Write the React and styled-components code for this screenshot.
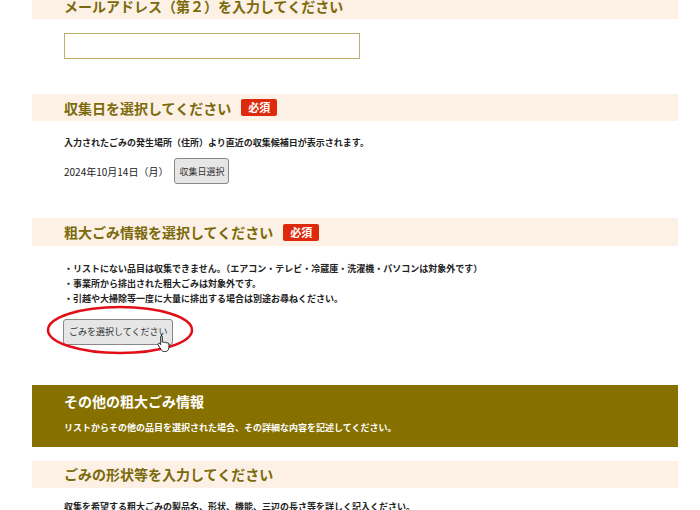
import React from 'react';
import styled, { createGlobalStyle } from 'styled-components';

const Global = createGlobalStyle`
  body { margin: 0; background: #fff; font-family: "Noto Sans CJK JP", "Noto Sans", sans-serif; color: #222; }
`;

const Page = styled.div`
  width: 646px;
  margin-left: 32px;
  margin-top: -8px;
`;

const Heading = styled.div`
  background: #fdf1e6;
  height: ${p => p.h || 27}px;
  padding-left: 32px;
  display: flex;
  align-items: center;
  gap: 10px;
  font-size: 14px;
  font-weight: bold;
  color: #7b6a0c;
  margin-top: ${p => p.mt || 0}px;
`;

const Required = styled.span`
  background: #dd2a0a;
  color: #fff;
  font-size: 11px;
  font-weight: bold;
  padding: 0 7px;
  height: 17px;
  line-height: 17px;
  border-radius: 2px;
`;

const Body = styled.div`
  padding-left: 32px;
  margin-top: ${p => p.mt || 0}px;
`;

const Input = styled.div`
  width: 294px;
  height: 24px;
  border: 1px solid #bfae6a;
  margin-top: 14px;
`;

const Note = styled.div`
  font-size: 9px;
  font-weight: bold;
  line-height: 15px;
  color: #222;
  white-space: nowrap;
`;

const DateRow = styled.div`
  display: flex;
  align-items: center;
  gap: 6px;
  font-size: 10px;
  margin-top: 8px;
`;

const Button = styled.button`
  font-family: inherit;
  font-size: 9px;
  color: #333;
  background: #e6e6e6;
  border: 1px solid #888;
  border-radius: 3px;
  height: 26px;
  padding: 0 ${p => p.px || 4}px;
  white-space: nowrap;
`;

const SelectWrap = styled.div`
  position: relative;
  margin-top: 10px;
  margin-left: -1px;
  width: 106px;
`;

const Ellipse = styled.svg`
  position: absolute;
  left: -18px;
  top: -12px;
`;

const Cursor = styled.svg`
  position: absolute;
  left: 94px;
  top: 18px;
`;

const Banner = styled.div`
  background: #857000;
  color: #fff;
  margin-top: 40px;
  height: 62px;
  padding-left: 32px;
  box-sizing: border-box;
  padding-top: 6px;
`;

const BannerTitle = styled.div`
  font-size: 14px;
  font-weight: bold;
`;

const BannerNote = styled.div`
  font-size: 9px;
  font-weight: bold;
  margin-top: 10px;
`;

export default function App() {
  return (
    <>
      <Global />
      <Page>
        <Heading h={27}>メールアドレス（第２）を入力してください</Heading>
        <Body><Input /></Body>
        <Heading mt={35}>収集日を選択してください <Required>必須</Required></Heading>
        <Body mt={14}>
          <Note>入力されたごみの発生場所（住所）より直近の収集候補日が表示されます。</Note>
          <DateRow>2024年10月14日（月）<Button>収集日選択</Button></DateRow>
        </Body>
        <Heading mt={34} h={28}>粗大ごみ情報を選択してください <Required>必須</Required></Heading>
        <Body mt={15}>
          <Note>・リストにない品目は収集できません。（エアコン・テレビ・冷蔵庫・洗濯機・パソコンは対象外です）</Note>
          <Note>・事業所から排出された粗大ごみは対象外です。</Note>
          <Note>・引越や大掃除等一度に大量に排出する場合は別途お尋ねください。</Note>
          <SelectWrap>
            <Button px={5}>ごみを選択してください</Button>
            <Ellipse width="150" height="52" viewBox="0 0 150 52">
              <ellipse cx="75" cy="26" rx="72" ry="23" fill="none" stroke="#e0101a" strokeWidth="2.5" />
            </Ellipse>
            <Cursor width="14" height="18" viewBox="0 0 14 18">
              <path d="M4 1.5c.8 0 1.3.6 1.3 1.3V8l.6-.1c.7 0 1.2.4 1.3.9.3-.4.7-.6 1.2-.6.6 0 1.1.4 1.2 1 .3-.3.6-.4 1-.4.8 0 1.3.6 1.3 1.4v3.4c0 2.2-1.6 4-3.8 4H7.3c-1.3 0-2.4-.7-3.1-1.8L1.2 11c-.4-.6-.2-1.4.4-1.700.5-.3 1.1-.1 1.5.4l.6.9V2.8c0-.7.5-1.3 1.3-1.3z" fill="#fff" stroke="#111" strokeWidth="0.9" />
            </Cursor>
          </SelectWrap>
        </Body>
        <Banner>
          <BannerTitle>その他の粗大ごみ情報</BannerTitle>
          <BannerNote>リストからその他の品目を選択された場合、その詳細な内容を記述してください。</BannerNote>
        </Banner>
        <Heading mt={14}>ごみの形状等を入力してください</Heading>
        <Body mt={11}>
          <Note>収集を希望する粗大ごみの製品名、形状、機能、三辺の長さ等を詳しく記入ください。</Note>
        </Body>
      </Page>
    </>
  );
}
